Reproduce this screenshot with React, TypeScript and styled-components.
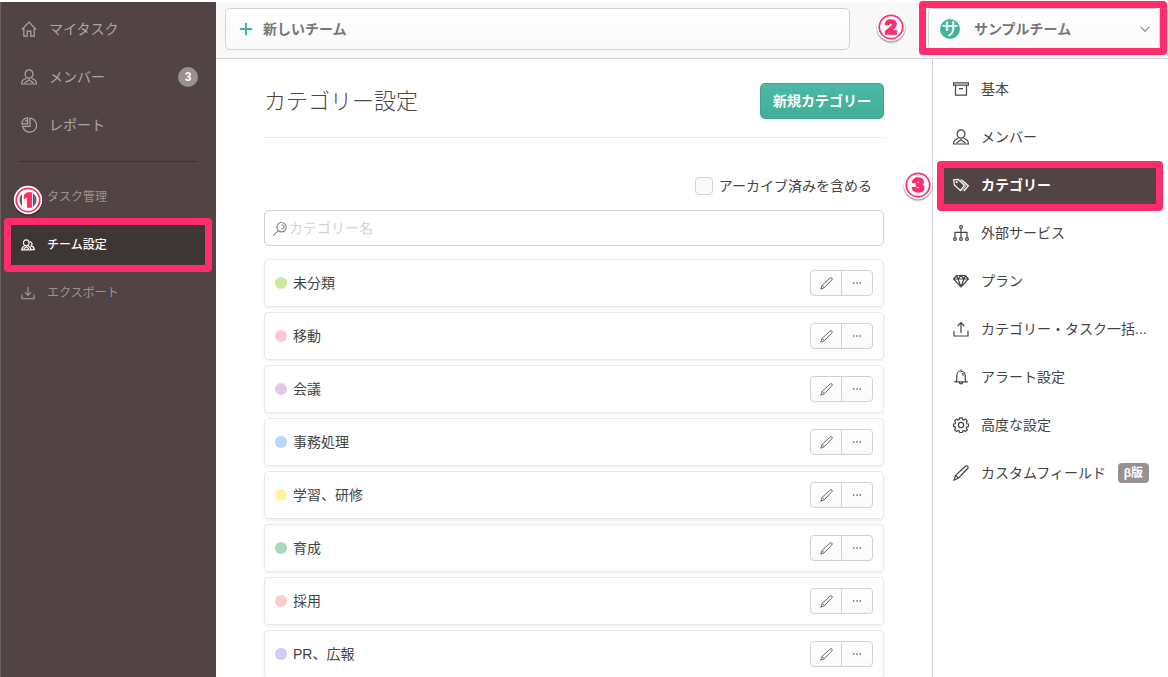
import React from 'react';
import styled, { createGlobalStyle, css } from 'styled-components';

const PINK = '#ff2d6b';
const BROWN = '#524445';
const TEAL = '#44b39d';

const GlobalStyle = createGlobalStyle`
  *, *::before, *::after { box-sizing: border-box; }
  html, body, #root { height: 100%; }
  body {
    margin: 0;
    background: #fff;
    color: #444;
    font-family: "Liberation Sans", "Noto Sans CJK JP", sans-serif;
    font-size: 14px;
    line-height: 20px;
    overflow: hidden;
  }
  a { color: inherit; text-decoration: none; }
  button, input { font: inherit; color: inherit; }
  ul { list-style: none; margin: 0; padding: 0; }
  svg { display: block; flex-shrink: 0; }
`;

const Page = styled.div`
  display: flex;
  height: 100vh;
  padding-top: 2px;
`;

const Sidebar = styled.nav`
  flex: 0 0 216px;
  background: ${BROWN};
  border-left: 1px solid #6a5d5e;
  color: #aea6a6;
  padding-top: 3px;
`;

const SideDivider = styled.hr`
  margin: 12px 18px 11px 17px;
  border: 0;
  border-top: 1px solid #3e3535;
`;

const SideLink = styled.a<{ $small?: boolean; $active?: boolean }>`
  position: relative;
  display: flex;
  align-items: center;
  height: 48px;
  padding: 0 18px 0 19px;
  gap: 11px;
  ${p => p.$small && css`
    gap: 12px;
    font-size: 12px;
    color: #9c9293;
  `}
  ${p => p.$active && css`
    margin: 0 6px;
    padding: 0 12px 0 13px;
    background: #3e3535;
    color: #fff;
    font-weight: 500;
  `}
`;

const SideIcon = styled.span<{ $small?: boolean }>`
  display: flex;
  justify-content: center;
  width: ${p => (p.$small ? 15 : 18)}px;
`;

const Count = styled.span`
  margin-left: auto;
  width: 20px;
  height: 20px;
  border-radius: 10px;
  background: #999190;
  color: #fff;
  font-size: 12px;
  font-weight: bold;
  text-align: center;
`;

const Workspace = styled.div`
  flex: 1;
  min-width: 0;
  display: flex;
  flex-direction: column;
`;

const Header = styled.header`
  display: flex;
  flex: 0 0 57px;
  align-items: flex-start;
  justify-content: space-between;
  padding: 6px 8px 0 9px;
  background: #f8f8f8;
  border-bottom: 1px solid #d2d2d2;
`;

const HeaderButton = styled.button`
  display: flex;
  align-items: center;
  height: 42px;
  border: 1px solid #d2d2d2;
  border-radius: 5px;
  background: linear-gradient(#fff, #fafafa);
  color: #777;
  font-weight: bold;
  text-align: left;
`;

const NewTeam = styled(HeaderButton)`
  flex: 0 1 625px;
  padding: 0 13px;
  gap: 10px;
`;

const TeamSwitch = styled(HeaderButton)`
  position: relative;
  flex: 0 0 232px;
  padding: 0 8px 0 11px;
`;

const TeamMark = styled.span`
  width: 20px;
  height: 20px;
  margin-right: 14px;
  border-radius: 10px;
  background: ${TEAL};
  color: #fff;
  font-size: 17px;
  font-weight: 500;
  line-height: 22px;
  text-align: center;
`;

const TeamName = styled.span`
  flex: 1;
`;

const Body = styled.div`
  flex: 1;
  min-height: 0;
  display: flex;
`;

const Main = styled.main`
  flex: 1;
  min-width: 0;
  padding: 24px 48px 0;
  overflow: hidden;
`;

const TitleBar = styled.div`
  display: flex;
  align-items: flex-start;
  justify-content: space-between;
  height: 55px;
  border-bottom: 1px solid #ebebeb;
`;

const Title = styled.h1`
  margin: 0;
  color: ${BROWN};
  font-size: 22px;
  font-weight: 300;
  line-height: 38px;
`;

const PrimaryButton = styled.button`
  height: 36px;
  padding: 0 12px;
  border: 1px solid #3ea590;
  border-radius: 5px;
  background: linear-gradient(#4cb9a4, #43ad98);
  color: #fff;
  font-weight: bold;
`;

const ArchiveToggle = styled.label`
  display: flex;
  align-items: center;
  justify-content: flex-end;
  gap: 6px;
  padding: 38px 12px 14px;
`;

const Checkbox = styled.input`
  appearance: none;
  width: 18px;
  height: 18px;
  margin: 0;
  border: 1px solid #d2d2d2;
  border-radius: 4px;
  background: #fafafa;
`;

const SearchBox = styled.label`
  display: flex;
  align-items: center;
  gap: 2px;
  height: 36px;
  padding: 0 7px;
  border: 1px solid #d2d2d2;
  border-radius: 5px;
  color: #888;
`;

const SearchInput = styled.input`
  flex: 1;
  min-width: 0;
  padding: 0;
  border: 0;
  outline: 0;
  background: none;
  &::placeholder { color: #d3d3d3; opacity: 1; }
`;

const CategoryList = styled.ul`
  display: flex;
  flex-direction: column;
  gap: 5px;
  padding-top: 13px;
`;

const CategoryCard = styled.li`
  display: flex;
  align-items: center;
  flex-shrink: 0;
  height: 48px;
  padding: 0 10px;
  border: 1px solid #e8e8e8;
  border-radius: 4px;
  box-shadow: 0 2px 3px rgba(0, 0, 0, 0.05);
`;

const Dot = styled.span<{ $color: string }>`
  width: 12px;
  height: 12px;
  margin-right: 6px;
  border-radius: 6px;
  background: ${p => p.$color};
`;

const CategoryName = styled.span`
  flex: 1;
`;

const ButtonPair = styled.div`
  display: flex;
`;

const SmallButton = styled.button`
  display: flex;
  align-items: center;
  justify-content: center;
  width: 32px;
  height: 26px;
  padding: 0;
  border: 1px solid #d2d2d2;
  background: linear-gradient(#fff, #fafafa);
  color: #666;
  &:first-child { border-radius: 4px 0 0 4px; }
  &:last-child { border-radius: 0 4px 4px 0; margin-left: -1px; }
`;

const Settings = styled.nav`
  flex: 0 0 236px;
  min-width: 0;
  padding: 11px 12px 0 11px;
  border-left: 1px solid #d2d2d2;
`;

const SettingsItem = styled.li`
  padding-bottom: 10px;
`;

const SettingsLink = styled.a<{ $active?: boolean }>`
  position: relative;
  display: flex;
  align-items: center;
  height: 38px;
  padding: 0 7px 0 9px;
  ${p => p.$active && css`
    background: ${BROWN};
    color: #fff;
    font-weight: bold;
  `}
`;

const SettingsLabel = styled.span`
  padding-left: 12px;
  white-space: nowrap;
`;

const Beta = styled.span`
  flex-shrink: 0;
  margin-left: auto;
  padding: 0 6px;
  border-radius: 4px;
  background: #999190;
  color: #fff;
  font-size: 12px;
  font-weight: bold;
`;

const Frame = styled.span<{ $inset: string }>`
  position: absolute;
  inset: ${p => p.$inset};
  z-index: 2;
  border: 7px solid ${PINK};
  border-radius: 4px;
  pointer-events: none;
`;

const Marker = styled.span<{ $left: number; $top: number }>`
  position: absolute;
  left: ${p => p.$left}px;
  top: ${p => p.$top}px;
  z-index: 3;
`;

function StepMarker({ n, left, top, shaded }: { n: number; left: number; top: number; shaded?: boolean }) {
  return (
    <Marker $left={left} $top={top}>
      <svg width="32" height="34" viewBox="0 0 32 34">
        <circle cx="16" cy="18" r="14.5" fill="#000" opacity="0.1" />
        <circle cx="16" cy="17" r="14.5" fill="#000" opacity="0.25" />
        <circle cx="16" cy="16" r="14.2" fill="#fff" />
        {shaded && <><circle cx="16" cy="16" r="8.6" fill="#6b5f60" /><path d="M10 6h11v20H10Z" fill="#fff" /></>}
        <circle cx="16" cy="16" r="11.7" fill="none" stroke={PINK} strokeWidth="1.7" />
        <text
          x="16" y="23" textAnchor="middle" fontFamily="Inter, Liberation Sans, sans-serif"
          fontWeight="900" fontSize="19" fill={PINK} stroke={PINK} strokeWidth="1.3"
        >{n}</text>
      </svg>
    </Marker>
  );
}

type IconName = 'home' | 'user' | 'users' | 'pie' | 'download' | 'upload' | 'box' | 'tags' | 'tree'
  | 'diamond' | 'bell' | 'gear' | 'pencil' | 'search' | 'dots' | 'chevron' | 'plus' | 'list';

const drawings: Record<IconName, React.ReactNode> = {
  home: <path d="M.8 8.6 8 1.2l7.2 7.4M2.8 7v8.2h3.4v-5h3.6v5h3.4V7" />,
  user: <><ellipse cx="8" cy="5" rx="3.900" ry="4.200" /><path d="M5.200 9.200 1.800 11.200Q.7 12 .6 15h14.800q-.1-3-1.200-3.800L10.800 9.200M3.600 14 8 10.800l4.400 3.200" /></>,
  users: <path d="M6 2.200a3.200 3.300 0 0 1 1.800 6.100L6 9.200l-1.800-.9A3.200 3.300 0 0 1 6 2.200ZM4 8.800C2 9.800.9 11 .8 13.500h10.600C11.300 11 10 9.800 8 8.800M3 12.200l3-2 3 2M10 4.400c2.300-.3 3.700 2.700 1.600 4.600 2 .5 3.400 1.800 3.600 4.300h-3.400" />,
  pie: <path d="M9 1.200a7 7 0 1 1-7.300 8.200H9ZM6.600.9v5.900H.8A6 6 0 0 1 6.600.9ZM6.600 3.900H4" />,
  download: <path d="M8 1v9.600M4.600 7.200 8 10.600l3.400-3.400M1 9.600v4.800h14V9.600" />,
  upload: <path d="M8 12V1.800M4.600 5 8 1.600 11.400 5M1 9.800V15h14V9.800" />,
  box: <path d="M.6 1.800h14.800v2.400H.6ZM2.500 4.400v9.800h11V4.400M6 7.600h4" />,
  tags: <><path d="M.7 2.800 5 2.400l6.400 6-4 5.200L1.400 8ZM8.400 2.600l6.900 6.200-4.400 5.200" /><path d="m6.800 2.400 6.400 6.200-4.100 5" strokeWidth=".8" /><circle cx="3.700" cy="5.200" r=".5" /></>,
  tree: <><circle cx="8" cy="2" r="1.400" /><circle cx="2" cy="14" r="1.400" /><circle cx="8" cy="14" r="1.400" /><circle cx="14" cy="14" r="1.400" /><path d="M8 3.400v9.200M2 12.600V7.400h12v5.200" /></>,
  diamond: <path d="M3.600 2.500h8.800L15.400 6 8 13.800.6 6ZM.6 6h14.800M5 6l3 7.600L11 6M3.600 2.500 5 6l3-3.500L11 6l1.400-3.500" />,
  bell: <path d="M1.200 12.800h13.600M3 12.600l.8-2V6.500a4.200 4.500 0 0 1 8.400 0v4.100l.8 2M8 2V.6M6.400 13c0 2.600 3.200 2.600 3.200 0M8.800 4.200c1 .4 1.400 1.200 1.500 2.400" />,
  gear: <><circle cx="8" cy="8" r="2.600" /><path d="M6.600.8h2.700l.3 1.700 1.300.6 1.500-1 1.900 1.900-1 1.500.6 1.300 1.700.3v2.300l-1.700.4-.6 1.300 1 1.500-1.900 1.900-1.500-1-1.300.6-.3 1.400H6.600l-.3-1.400-1.300-.6-1.500 1-1.900-1.900 1-1.500-.6-1.300-1.500-.4V7.100L2 6.800l.6-1.300-1-1.500 1.900-1.900 1.500 1 1.300-.6Z" /></>,
  pencil: <path d="m1 15 1.600-4.700L12.400 1.300q1.400-1 2.300 0 .9 1-.1 2.200L5.300 13.200ZM2.600 10.300l2.700 2.900" />,
  search: <><circle cx="10.200" cy="6.600" r="5" /><path d="M6.600 10.200 1 15.800M10.200 4.400a2 2 0 1 1-.4 3.500" /></>,
  dots: <path d="M4 8h1.400M7.300 8h1.400M10.600 8H12" />,
  chevron: <path d="m2 5 6 6 6-6" />,
  plus: <path d="M8 1v14M1 8h14" />,
  list: <path d="M1 3h14M1 8h14M1 13h14" />,
};

function Icon({ name, size = 16, weight = 1.2 }: { name: IconName; size?: number; weight?: number }) {
  return (
    <svg width={size} height={size} viewBox="0 0 16 16" fill="none" stroke="currentColor" strokeWidth={weight} aria-hidden="true">
      {drawings[name]}
    </svg>
  );
}

const PlusMark = styled.span`
  color: ${TEAL};
`;

const categories = [
  ['未分類', '#c8eb9c'],
  ['移動', '#fcc4da'],
  ['会議', '#e0cbea'],
  ['事務処理', '#b5d7f8'],
  ['学習、研修', '#fdf49c'],
  ['育成', '#a8d9c0'],
  ['採用', '#f8cecb'],
  ['PR、広報', '#cecdf2'],
];

const settings: { icon: IconName; label: string; active?: boolean; beta?: boolean }[] = [
  { icon: 'box', label: '基本' },
  { icon: 'user', label: 'メンバー' },
  { icon: 'tags', label: 'カテゴリー', active: true },
  { icon: 'tree', label: '外部サービス' },
  { icon: 'diamond', label: 'プラン' },
  { icon: 'upload', label: 'カテゴリー・タスク一括...' },
  { icon: 'bell', label: 'アラート設定' },
  { icon: 'gear', label: '高度な設定' },
  { icon: 'pencil', label: 'カスタムフィールド', beta: true },
];

export default function App() {
  return (
    <>
      <GlobalStyle />
      <Page>
        <Sidebar>
          <SideLink href="#tasks"><SideIcon><Icon name="home" /></SideIcon>マイタスク</SideLink>
          <SideLink href="#members"><SideIcon><Icon name="user" /></SideIcon>メンバー<Count>3</Count></SideLink>
          <SideLink href="#reports"><SideIcon><Icon name="pie" /></SideIcon>レポート</SideLink>
          <SideDivider />
          <SideLink href="#manage" $small>
            <SideIcon $small><Icon name="list" size={14} /></SideIcon>タスク管理
            <StepMarker n={1} left={11} top={11} shaded />
          </SideLink>
          <SideLink href="#team" $small $active>
            <SideIcon $small><Icon name="users" size={14} weight={1.4} /></SideIcon>チーム設定
            <Frame $inset="-3px -2px -3px -3px" />
          </SideLink>
          <SideLink href="#export" $small><SideIcon $small><Icon name="download" size={14} weight={1.4} /></SideIcon>エクスポート</SideLink>
        </Sidebar>
        <Workspace>
          <Header>
            <NewTeam type="button"><PlusMark><Icon name="plus" size={14} weight={2.2} /></PlusMark>新しいチーム</NewTeam>
            <TeamSwitch type="button">
              <TeamMark>サ</TeamMark>
              <TeamName>サンプルチーム</TeamName>
              <Icon name="chevron" size={12} weight={1.4} />
              <Frame $inset="-8px -8px -6px -10px" />
              <StepMarker n={2} left={-54} top={2} />
            </TeamSwitch>
          </Header>
          <Body>
            <Main>
              <TitleBar>
                <Title>カテゴリー設定</Title>
                <PrimaryButton type="button">新規カテゴリー</PrimaryButton>
              </TitleBar>
              <ArchiveToggle><Checkbox type="checkbox" />アーカイブ済みを含める</ArchiveToggle>
              <SearchBox>
                <Icon name="search" size={15} />
                <SearchInput type="text" placeholder="カテゴリー名" aria-label="カテゴリー名" />
              </SearchBox>
              <CategoryList>
                {categories.map(([name, color]) => (
                  <CategoryCard key={name}>
                    <Dot $color={color} />
                    <CategoryName>{name}</CategoryName>
                    <ButtonPair>
                      <SmallButton type="button" aria-label="編集"><Icon name="pencil" size={13} /></SmallButton>
                      <SmallButton type="button" aria-label="その他"><Icon name="dots" size={16} weight={1.4} /></SmallButton>
                    </ButtonPair>
                  </CategoryCard>
                ))}
              </CategoryList>
            </Main>
            <Settings>
              <ul>
                {settings.map(s => (
                  <SettingsItem key={s.label}>
                    <SettingsLink href={'#' + s.icon} $active={s.active}>
                      <Icon name={s.icon} />
                      <SettingsLabel>{s.label}</SettingsLabel>
                      {s.beta && <Beta>β版</Beta>}
                      {s.active && <Frame $inset="-5px -7px -7px -7px" />}
                      {s.active && <StepMarker n={3} left={-42} top={3} />}
                    </SettingsLink>
                  </SettingsItem>
                ))}
              </ul>
            </Settings>
          </Body>
        </Workspace>
      </Page>
    </>
  );
}
